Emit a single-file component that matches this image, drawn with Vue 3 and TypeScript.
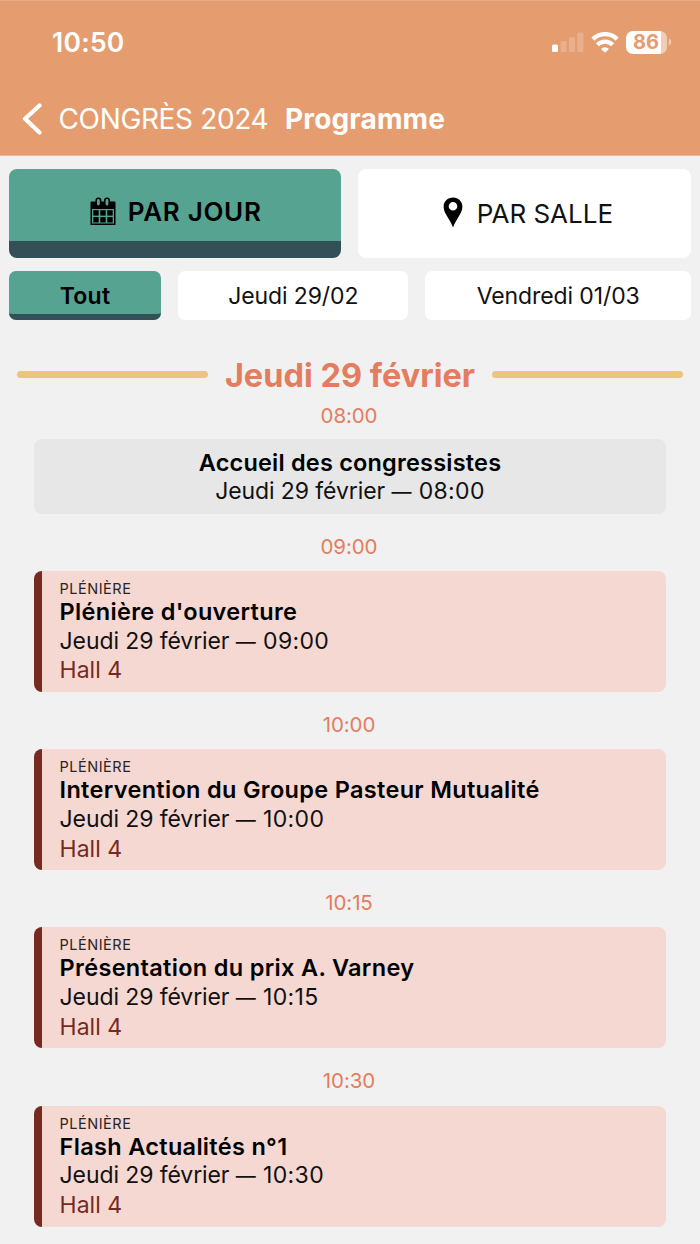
<script setup lang="ts">
interface Session {
  time: string
  title: string
  kind?: string
  room?: string
}

const day = 'Jeudi 29 février'

const sessions: Session[] = [
  { time: '08:00', title: 'Accueil des congressistes' },
  { time: '09:00', title: "Plénière d'ouverture", kind: 'PLÉNIÈRE', room: 'Hall 4' },
  { time: '10:00', title: 'Intervention du Groupe Pasteur Mutualité', kind: 'PLÉNIÈRE', room: 'Hall 4' },
  { time: '10:15', title: 'Présentation du prix A. Varney', kind: 'PLÉNIÈRE', room: 'Hall 4' },
  { time: '10:30', title: 'Flash Actualités n°1', kind: 'PLÉNIÈRE', room: 'Hall 4' },
]
</script>

<template>
  <div class="screen">
    <header class="top">
      <div class="status">
        <span class="clock">10:50</span>
        <div class="indicators">
          <svg class="signal" width="32" height="21" viewBox="0 0 32 21">
            <rect x="0" y="12.5" width="6" height="7.5" rx="1.5" fill="#fff" />
            <g fill="#fff" fill-opacity="0.2">
              <rect x="8.6" y="9" width="6" height="11" rx="1.5" />
              <rect x="17" y="5" width="6" height="15" rx="1.5" />
              <rect x="25.4" y="0.5" width="6" height="19.5" rx="1.5" />
            </g>
          </svg>
          <svg class="wifi" width="28" height="21" viewBox="0 0 28 21">
            <g fill="none" stroke="#fff" stroke-width="4.3">
              <path d="M1.9 7.1A17.2 17.2 0 0 1 26.1 7.1" />
              <path d="M6.3 12.8A10.8 10.8 0 0 1 21.7 12.8" />
            </g>
            <path d="M14 20.8L10 16.9A5.7 5.7 0 0 1 18 16.9Z" fill="#fff" />
          </svg>
          <div class="battery">
            <div class="cell">86</div>
            <svg width="4" height="8" viewBox="0 0 4 8"><path d="M0.9 0.6Q3.3 1.5 3.3 4T0.9 7.4Z" fill="#fff" fill-opacity="0.5" /></svg>
          </div>
        </div>
      </div>
      <nav class="crumbs">
        <svg class="back" width="20" height="34" viewBox="0 0 20 34">
          <path d="M17.5 3.5L3 16.8L17.5 30.5" fill="none" stroke="#fff" stroke-width="4.2" stroke-linecap="round" stroke-linejoin="round" />
        </svg>
        <span class="parent">CONGRÈS 2024</span>
        <span class="current">Programme</span>
      </nav>
    </header>

    <div class="modes">
      <button class="mode active">
        <svg class="calendar" width="26" height="29" viewBox="0 0 26 29">
          <path fill="#000" fill-rule="evenodd" d="M1.5 4.5H24.5Q25.5 4.5 25.5 5.5V28H0.5V5.5Q0.5 4.5 1.5 4.5ZM2 12V26.6H24V12Z" />
          <g fill="#000">
            <rect x="3.3" y="13.2" width="5.4" height="5.4" />
            <rect x="10.3" y="13.2" width="5.4" height="5.4" />
            <rect x="17.3" y="13.2" width="5.4" height="5.4" />
            <rect x="3.3" y="20.1" width="5.4" height="5.4" />
            <rect x="10.3" y="20.1" width="5.4" height="5.4" />
            <rect x="17.3" y="20.1" width="5.4" height="5.4" />
          </g>
          <rect x="6.2" y="1.2" width="4.4" height="8" rx="2.2" fill="#57a391" stroke="#000" stroke-width="1.6" />
          <rect x="14.8" y="1.2" width="4.4" height="8" rx="2.2" fill="#57a391" stroke="#000" stroke-width="1.6" />
        </svg>
        <span class="mode-day">PAR JOUR</span>
      </button>
      <button class="mode">
        <svg class="pin" width="20" height="31" viewBox="0 0 20 31">
          <path fill="#000" fill-rule="evenodd" d="M10 0.5C15.4 0.5 19.4 4.5 19.4 9.7C19.4 13.8 17.2 17 15 20.8C13 24.2 11.3 27 10 30.5C8.7 27 7 24.2 5 20.8C2.8 17 0.6 13.8 0.6 9.7C0.6 4.5 4.6 0.5 10 0.5ZM10 4.9A4.3 4.3 0 1 0 10 13.5A4.3 4.3 0 1 0 10 4.9Z" />
        </svg>
        <span class="mode-room">PAR SALLE</span>
      </button>
    </div>

    <div class="days">
      <button class="day all">Tout</button>
      <button class="day thu">Jeudi 29/02</button>
      <button class="day fri">Vendredi 01/03</button>
    </div>

    <main>
      <h1><i class="rule"></i><span>{{ day }}</span><i class="rule"></i></h1>
      <section v-for="s in sessions" :key="s.time">
        <div class="slot">{{ s.time }}</div>
        <article :class="s.kind ? 'plenary' : 'plain'">
          <div v-if="s.kind" class="kind">{{ s.kind }}</div>
          <div class="title">{{ s.title }}</div>
          <div class="when">{{ day }} <span class="dash">—</span> <span class="hour">{{ s.time }}</span></div>
          <div v-if="s.room" class="room">{{ s.room }}</div>
        </article>
      </section>
    </main>
  </div>
</template>

<style>
body {
  background: #f1f1f1;
}
</style>

<style scoped>
.screen {
  width: 700px;
  height: 1244px;
  overflow: hidden;
  box-sizing: border-box;
  background: #f1f1f1;
  color: #111;
  font-family: Inter, "Liberation Sans", sans-serif;
  font-size: 23px;
}
.top {
  height: 156px;
  box-sizing: border-box;
  background: #e59d70;
  border-top: 1px solid #e8ab85;
  border-bottom: 1px solid #eeb899;
  color: #fff;
}
.status {
  height: 82px;
  display: flex;
  align-items: center;
  justify-content: space-between;
  padding: 0 28px 0 52px;
}
.clock {
  font-size: 26.5px;
  font-weight: 600;
  letter-spacing: 0.25px;
}
.indicators {
  display: flex;
  align-items: center;
}
.wifi {
  margin: 0 7px 0 7px;
}
.battery {
  display: flex;
  align-items: center;
}
.battery svg {
  margin-left: 1px;
}
.cell {
  width: 41px;
  height: 23px;
  border-radius: 7px;
  background: linear-gradient(to right, #fff 35px, #f2cdb6 35px);
  color: #e59d70;
  font-size: 20px;
  font-weight: 700;
  line-height: 23px;
  text-align: center;
  text-indent: -1px;
}
.crumbs {
  height: 72px;
  display: flex;
  align-items: center;
  padding-left: 22px;
  font-size: 28px;
}
.parent {
  width: 212px;
  margin-left: 16.5px;
  font-weight: 400;
  letter-spacing: -0.35px;
  white-space: nowrap;
}
.current {
  margin-left: 14.5px;
  font-weight: 700;
  letter-spacing: 0.15px;
}
button {
  border: 0;
  margin: 0;
  padding: 0;
  background: #fff;
  color: #111;
  font: inherit;
  border-radius: 8px;
}
.modes {
  display: grid;
  grid-template-columns: 332px 333.5px;
  gap: 17px;
  padding: 13px 8.7px 0;
}
.mode {
  height: 89px;
  display: flex;
  align-items: center;
  justify-content: center;
  font-size: 26px;
}
.mode.active {
  padding-top: 12px;
  padding-left: 2px;
  background: #57a391;
  border-bottom: 17px solid #335059;
  color: #000;
  font-weight: 600;
}
.mode-day {
  letter-spacing: 0.7px;
}
.calendar {
  margin-right: 12px;
}
.pin {
  margin: -3px 14px 0 7px;
}
.days {
  display: grid;
  grid-template-columns: 152.7px 230px 266px;
  gap: 16.9px;
  padding: 13px 8.7px 0;
}
.day {
  height: 49px;
  border-radius: 7px;
  letter-spacing: -0.1px;
}
.day.all {
  padding-top: 6px;
  background: #57a391;
  border-bottom: 6px solid #335059;
  color: #000;
  font-weight: 600;
  letter-spacing: 0.3px;
}
h1 {
  margin: 33px 17px 0;
  height: 44px;
  display: flex;
  align-items: center;
  justify-content: space-between;
  color: #e47c60;
  font-size: 32.5px;
  font-weight: 700;
}
.rule {
  width: 191px;
  height: 7px;
  margin-bottom: 2px;
  border-radius: 3.5px;
  background: #eac67c;
}
.slot {
  height: 57.25px;
  box-sizing: border-box;
  padding-top: 21.2px;
  line-height: 24px;
  text-align: center;
  color: #e47c60;
  font-size: 20.5px;
  font-weight: 400;
  letter-spacing: -0.1px;
  text-indent: -2px;
}
section:first-of-type .slot {
  height: 42px;
  padding-top: 7px;
}
article {
  margin: 0 34px;
  box-sizing: border-box;
  border-radius: 8px;
  line-height: 28.8px;
}
.plain {
  height: 74.5px;
  padding-top: 9.5px;
  background: #e7e7e7;
  text-align: center;
}
.plenary {
  height: 121px;
  padding: 9.1px 0 0 17.6px;
  border-left: 8px solid #772a20;
  background: #f5d8d2;
}
.kind {
  height: 18px;
  line-height: 18px;
  font-size: 14.5px;
  font-weight: 400;
  color: #2b2423;
  letter-spacing: 0.5px;
}
.title {
  color: #000;
  font-size: 23.5px;
  font-weight: 600;
  letter-spacing: 0.32px;
}
.plain .title {
  letter-spacing: 0.2px;
}
.when {
  font-weight: 400;
  letter-spacing: -0.1px;
}
.dash {
  margin-right: 1px;
  font-size: 20px;
}
.hour {
  letter-spacing: 0.35px;
}
.room {
  color: #772a20;
  font-weight: 400;
}
</style>
